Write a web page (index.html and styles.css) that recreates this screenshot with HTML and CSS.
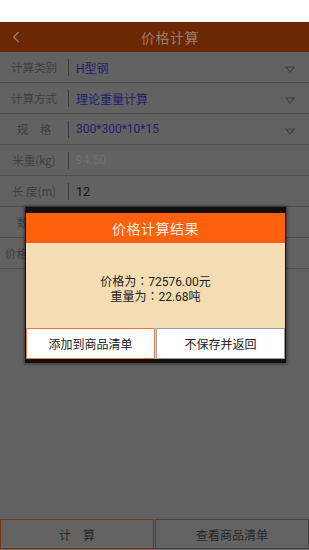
FILE: index.html
```html
<!DOCTYPE html>
<html lang="zh">
<head>
<meta charset="utf-8">
<title>价格计算</title>
<link rel="stylesheet" href="styles.css">
</head>
<body>
<div class="screen">
  <div class="statusbar"></div>
  <header class="topbar">
    <span class="back"><svg width="8" height="12" viewBox="0 0 8 12"><path d="M6.5 1 L1.8 6 L6.5 11" fill="none" stroke="#8f7568" stroke-width="1.6"/></svg></span>
    <h1 class="title">价格计算</h1>
  </header>
  <main class="form">
    <div class="row"><span class="label">计算类别</span><span class="sep"></span><span class="value blue">H型钢</span><span class="arrow"><svg width="10" height="7" viewBox="0 0 10 7"><path d="M1 1 H9 L5 6 Z" fill="none" stroke="#3e3e3e" stroke-width="1.1"/></svg></span></div>
    <div class="row"><span class="label">计算方式</span><span class="sep"></span><span class="value blue">理论重量计算</span><span class="arrow"><svg width="10" height="7" viewBox="0 0 10 7"><path d="M1 1 H9 L5 6 Z" fill="none" stroke="#3e3e3e" stroke-width="1.1"/></svg></span></div>
    <div class="row"><span class="label">规　格</span><span class="sep"></span><span class="value blue">300*300*10*15</span><span class="arrow"><svg width="10" height="7" viewBox="0 0 10 7"><path d="M1 1 H9 L5 6 Z" fill="none" stroke="#3e3e3e" stroke-width="1.1"/></svg></span></div>
    <div class="row"><span class="label">米重(kg)</span><span class="sep"></span><span class="value hint">94.50</span></div>
    <div class="row"><span class="label">长 度(m)</span><span class="sep"></span><span class="value dark">12</span></div>
    <div class="row"><span class="label">数　量</span><span class="sep"></span><span class="value dark"></span></div>
    <div class="row"><span class="label">价格(元/吨)</span><span class="sep"></span><span class="value dark"></span></div>
  </main>
  <footer class="bottombar">
    <button class="btn btn-primary">计　算</button>
    <button class="btn btn-secondary">查看商品清单</button>
  </footer>

  <div class="dialog">
    <div class="dialog-title">价格计算结果</div>
    <div class="dialog-body" lang="zh-Hant">
      <p>价格为：72576.00元</p>
      <p>重量为：22.68吨</p>
    </div>
    <div class="dialog-actions">
      <button class="dbtn dbtn-add">添加到商品清单</button>
      <button class="dbtn dbtn-back">不保存并返回</button>
    </div>
  </div>
</div>
</body>
</html>
```

FILE: styles.css
```css
* { box-sizing: border-box; margin: 0; padding: 0; }
html, body { width: 309px; height: 550px; overflow: hidden; }
body {
  font-family: "Noto Sans CJK SC", "Noto Sans", "Liberation Sans", sans-serif;
  background: #626262;
}
.screen {
  position: relative;
  width: 309px;
  height: 550px;
  display: flex;
  flex-direction: column;
}
.statusbar { height: 22px; background: #ffffff; }
.topbar {
  height: 30px;
  background: #6a2903;
  display: flex;
  align-items: center;
  padding-left: 12px;
}
.back { width: 10px; display: flex; align-items: center; }
.title {
  flex: 1;
  text-align: center;
  font-size: 14px;
  font-weight: normal;
  color: #9a7c6c;
  padding-left: 9px;
  letter-spacing: 0.5px;
}
.form { display: flex; flex-direction: column; }
.row {
  height: 31px;
  border-bottom: 1px solid #4c4c4c;
  display: flex;
  align-items: center;
}
.label {
  width: 68px;
  text-align: center;
  font-size: 11.5px;
  color: #3f3f3f;
  white-space: nowrap;
  overflow: hidden;
}
.sep {
  width: 1px;
  height: 17px;
  background: #3a3a3a;
  margin-right: 7px;
}
.value { flex: 1; font-size: 12px; }
.blue { color: #1d1e6e; font-family: "Roboto", "Noto Sans CJK SC", sans-serif; }
.hint { color: #707070; font-family: "Roboto", sans-serif; }
.dark { color: #111111; font-family: "Roboto", sans-serif; font-size: 12.5px; }
.arrow { width: 20px; display: flex; align-items: center; margin-right: 4px; margin-top: 4px; }

.bottombar {
  margin-top: auto;
  height: 30px;
  margin-bottom: 1px;
  display: flex;
  gap: 1px;
}
.btn {
  flex: 1;
  font-family: inherit;
  font-size: 12px;
  color: #262626;
  background: #636363;
  cursor: pointer;
}
.btn-primary { border: 1px solid #7a3516; }
.btn-secondary { border: 1px solid #444444; }

.dialog {
  position: absolute;
  left: 25px;
  top: 207px;
  width: 261px;
  background: #101010;
  padding: 6px 1px 4px 1px;
  box-shadow: 0 0 3px 1px rgba(0,0,0,0.45);
  display: flex;
  flex-direction: column;
}
.dialog-title {
  height: 30px;
  background: #ff600b;
  color: #fcefe4;
  font-size: 14px;
  display: flex;
  align-items: center;
  justify-content: center;
  letter-spacing: 0.5px;
}
.dialog-body {
  height: 85px;
  background: #f4ddb3;
  display: flex;
  flex-direction: column;
  align-items: center;
  justify-content: center;
  padding-top: 8px;
  font-family: "Roboto", "Noto Sans CJK TC", sans-serif;
  font-size: 12px;
  line-height: 15px;
  color: #222222;
}
.dialog-actions {
  display: flex;
  gap: 1px;
  background: #f4ddb3;
  height: 31px;
}
.dbtn {
  flex: 1;
  background: #ffffff;
  font-family: inherit;
  font-size: 12px;
  color: #222222;
}
.dbtn-add { border: 1px solid #e9793e; }
.dbtn-back { border: 1px solid #a0a0a0; }
```
